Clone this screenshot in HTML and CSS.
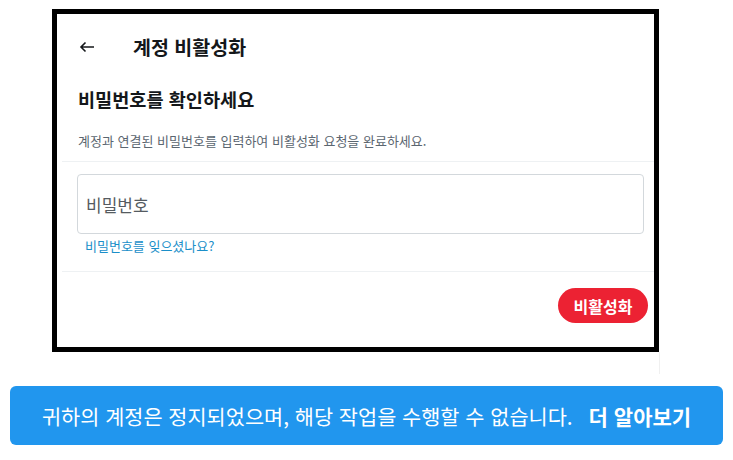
FILE: index.html
```html
<!DOCTYPE html>
<html lang="ko">
<head>
<meta charset="UTF-8">
<meta name="viewport" content="width=device-width, initial-scale=1.0">
<title>계정 비활성화</title>
<link rel="stylesheet" href="styles.css">
</head>
<body>
<div class="frame">
    <div class="header">
        <span class="back">
            <svg width="16" height="12" viewBox="0 0 16 12">
                <path d="M15 6H2M6.5 1.5L2 6l4.5 4.5" fill="none" stroke="#14171a" stroke-width="1.6"/>
            </svg>
        </span>
        <h1 class="title">계정 비활성화</h1>
    </div>

    <h2 class="heading">비밀번호를 확인하세요</h2>
    <p class="desc">계정과 연결된 비밀번호를 입력하여 비활성화 요청을 완료하세요.</p>
    <div class="divider"></div>

    <div class="field">
        <input type="password" placeholder="비밀번호">
    </div>
    <a class="forgot" href="#">비밀번호를 잊으셨나요?</a>
    <div class="divider divider-low"></div>

    <div class="actions">
        <button class="deactivate">비활성화</button>
    </div>
</div>
<div class="edge"></div>

<!-- suspended notice -->
<div class="notice">
    <span>귀하의 계정은 정지되었으며, 해당 작업을 수행할 수 없습니다.</span>
    <a href="#">더 알아보기</a>
</div>
</body>
</html>
```

FILE: styles.css
```css
body {
    margin: 0;
    background-color: #fff;
    font-family: "Noto Sans CJK KR", "Noto Sans", sans-serif;
    color: #14171a;
}

.frame {
    margin: 9px 0 0 52px;
    width: 597px;
    height: 333px;
    border: 5px solid #000;
    background-color: #fff;
}

.header {
    display: flex;
    align-items: center;
    height: 66px;
    padding-left: 22px;
}

.back {
    display: flex;
    width: 54px;
}

.title {
    margin: 0;
    font-size: 19.5px;
    font-weight: 700;
    line-height: 24px;
}

.heading {
    margin: 0;
    padding-left: 21px;
    font-size: 18.6px;
    font-weight: 700;
    line-height: 38px;
}

.desc {
    margin: 13px 0 10px;
    padding-left: 21px;
    font-size: 13px;
    line-height: 20px;
    color: #5b6670;
}

.divider {
    margin-left: 5px;
    height: 1px;
    background-color: #eef1f3;
}

.field {
    margin: 12px 10px 0 20px;
}

.field input {
    box-sizing: border-box;
    width: 100%;
    height: 60px;
    padding: 0 8px;
    border: 1px solid #d3d8dc;
    border-radius: 4px;
    font-family: inherit;
    font-size: 17px;
    color: #14171a;
    outline: none;
}

.field input::placeholder {
    color: #555b61;
}

.forgot {
    display: block;
    padding-left: 28px;
    font-size: 13px;
    line-height: 24px;
    color: #1b8fc9;
    text-decoration: none;
}

.divider-low {
    margin-top: 13px;
}

.actions {
    display: flex;
    justify-content: flex-end;
    margin-top: 16px;
    padding-right: 6px;
}

.deactivate {
    width: 90px;
    height: 35px;
    border: none;
    border-radius: 18px;
    background-color: #ec2233;
    color: #fff;
    font-family: inherit;
    font-size: 16px;
    font-weight: 700;
}

.edge {
    margin-left: 659px;
    width: 1px;
    height: 22px;
    background-color: #f0f0f0;
}

/*------------------ Notice banner ------------------*/
.notice {
    display: flex;
    align-items: center;
    justify-content: center;
    gap: 16px;
    margin: 12px 0 0 10px;
    width: 713px;
    height: 59px;
    border-radius: 6px;
    background-color: #2196ee;
    color: #fff;
    font-size: 20.8px;
    line-height: 24px;
}

.notice a {
    color: #fff;
    font-size: 21px;
    font-weight: 700;
    text-decoration: none;
}
```
